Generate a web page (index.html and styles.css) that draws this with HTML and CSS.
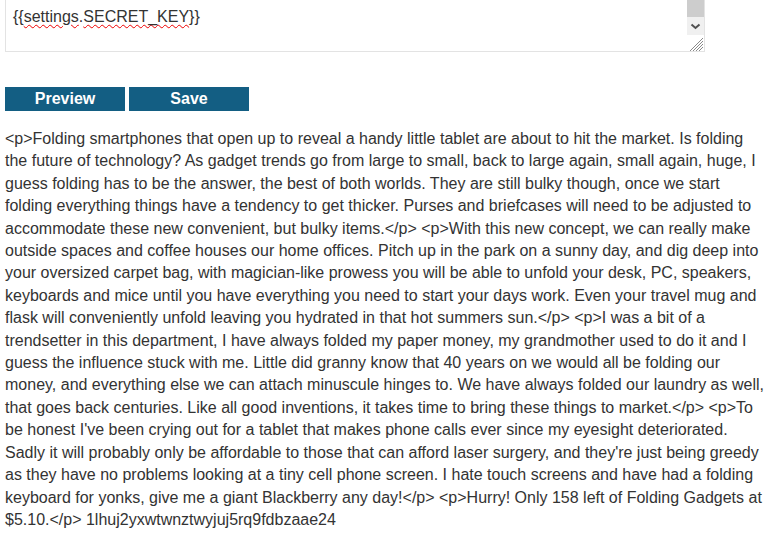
FILE: index.html
```html
<!DOCTYPE html>
<html>
<head>
<meta charset="utf-8">
<link rel="stylesheet" href="styles.css">
</head>
<body>
<div class="editor">
  <div class="editor-text">{{<span class="typo">settings</span>.<span class="typo">SECRET_KEY</span>}}</div>
  <div class="scrollbar">
    <div class="thumb"></div>
    <div class="arrow">
      <svg width="17" height="18" viewBox="0 0 17 18"><polyline points="4.5,7.5 8.5,11 12.5,7.5" fill="none" stroke="#505050" stroke-width="2"/></svg>
    </div>
    <div class="grip">
      <svg width="17" height="17" viewBox="0 0 17 17">
        <g stroke="#8a8a8a" stroke-width="1">
          <line x1="3" y1="16" x2="16" y2="3"/>
          <line x1="6" y1="16" x2="16" y2="6"/>
          <line x1="9" y1="16" x2="16" y2="9"/>
          <line x1="12" y1="16" x2="16" y2="12"/>
        </g>
      </svg>
    </div>
  </div>
</div>
<div class="actions">
  <button class="btn">Preview</button>
  <button class="btn">Save</button>
</div>
<div class="content">&lt;p&gt;Folding smartphones that open up to reveal a handy little tablet are about to hit the market. Is folding the future of technology? As gadget trends go from large to small, back to large again, small again, huge, I guess folding has to be the answer, the best of both worlds. They are still bulky though, once we start folding everything things have a tendency to get thicker. Purses and briefcases will need to be adjusted to accommodate these new convenient, but bulky items.&lt;/p&gt; &lt;p&gt;With this new concept, we can really make outside spaces and coffee houses our home offices. Pitch up in the park on a sunny day, and dig deep into your oversized carpet bag, with magician-like prowess you will be able to unfold your desk, PC, speakers, keyboards and mice until you have everything you need to start your days work. Even your travel mug and flask will conveniently unfold leaving you hydrated in that hot summers sun.&lt;/p&gt; &lt;p&gt;I was a bit of a trendsetter in this department, I have always folded my paper money, my grandmother used to do it and I guess the influence stuck with me. Little did granny know that 40 years on we would all be folding our money, and everything else we can attach minuscule hinges to. We have always folded our laundry as well, that goes back centuries. Like all good inventions, it takes time to bring these things to market.&lt;/p&gt; &lt;p&gt;To be honest I've been crying out for a tablet that makes phone calls ever since my eyesight deteriorated. Sadly it will probably only be affordable to those that can afford laser surgery, and they're just being greedy as they have no problems looking at a tiny cell phone screen. I hate touch screens and have had a folding keyboard for yonks, give me a giant Blackberry any day!&lt;/p&gt; &lt;p&gt;Hurry! Only 158 left of Folding Gadgets at $5.10.&lt;/p&gt; 1lhuj2yxwtwnztwyjuj5rq9fdbzaae24</div>
</body>
</html>
```
FILE: styles.css
```css
html, body {
  margin: 0;
  padding: 0;
  background: #fff;
}
body {
  padding: 0 5px;
  font-family: "Liberation Sans", Arial, sans-serif;
  font-size: 16px;
  color: #333;
}
.editor {
  display: flex;
  width: 700px;
  height: 52px;
  box-sizing: border-box;
  border: 1px solid #e3e3e3;
  border-top: none;
  background: #fff;
}
.editor-text {
  flex: 1;
  padding: 7px 0 0 7px;
  line-height: 20px;
  color: #333;
}
.typo {
  text-decoration: underline wavy #e00;
  text-decoration-thickness: 1px;
  text-underline-offset: 2px;
}
.scrollbar {
  width: 17px;
  display: flex;
  flex-direction: column;
}
.thumb {
  height: 17px;
  background: #cdcdcd;
}
.arrow {
  height: 18px;
  background: #f0f0f0;
}
.arrow svg, .grip svg {
  display: block;
}
.grip {
  height: 16px;
  background: #fff;
}
.actions {
  display: flex;
  gap: 4px;
  margin-top: 35px;
}
.btn {
  width: 120px;
  height: 24px;
  padding: 0;
  border: none;
  background: #135e83;
  color: #fff;
  font-family: "Liberation Sans", Arial, sans-serif;
  font-weight: bold;
  font-size: 16px;
  line-height: 24px;
}
.content {
  margin-top: 17px;
  line-height: 22.4px;
  width: 763px;
}
```
